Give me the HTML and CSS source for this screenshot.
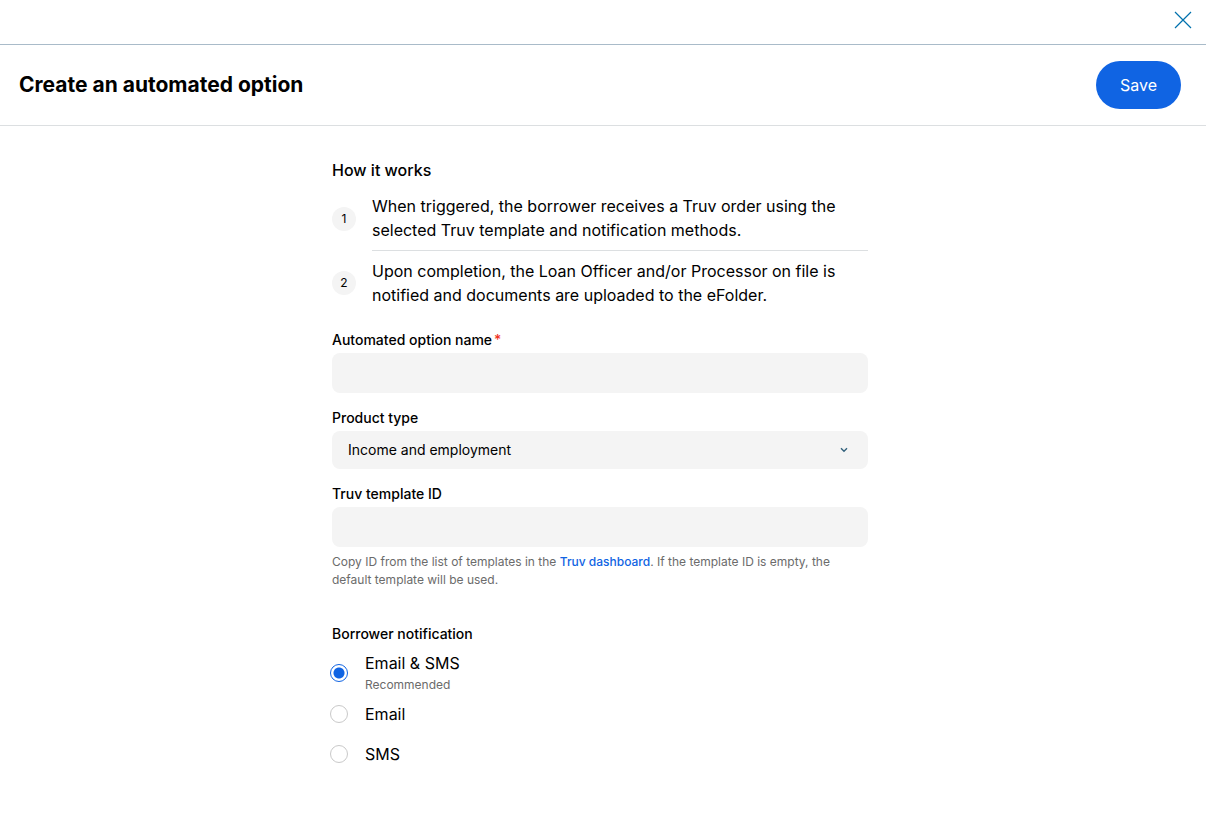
FILE: index.html
```html
<!DOCTYPE html>
<html lang="en">
<head>
<meta charset="utf-8">
<meta name="viewport" content="width=device-width, initial-scale=1">
<title>Create an automated option</title>
<link rel="stylesheet" href="styles.css">
</head>
<body>
<div class="topbar">
  <button class="close" type="button" aria-label="Close">
    <svg width="18" height="18" viewBox="0 0 18 18" fill="none" stroke="currentColor" stroke-width="1.2" aria-hidden="true"><path d="M1 1L17 17M17 1L1 17"/></svg>
  </button>
</div>
<header class="header">
  <h1 class="title">Create an automated option</h1>
  <button class="save" type="submit" form="option-form">Save</button>
</header>
<main class="main">
  <form class="form" id="option-form">
    <section class="how">
      <h2 class="how-title">How it works</h2>
      <ol class="steps">
        <li class="step"><span class="step-number">1</span><p class="step-text">When triggered, the borrower receives a Truv order using the selected Truv template and notification methods.</p></li>
        <li class="step"><span class="step-number">2</span><p class="step-text">Upon completion, the Loan Officer and/or Processor on file is notified and documents are uploaded to the eFolder.</p></li>
      </ol>
    </section>
    <div class="field">
      <label class="label" for="name">Automated option name<span class="required">*</span></label>
      <input class="control" id="name" type="text" required>
    </div>
    <div class="field">
      <label class="label" for="product">Product type</label>
      <div class="select-wrap">
        <select class="control select" id="product"><option>Income and employment</option></select>
        <svg class="chevron" width="8" height="6" viewBox="0 0 8 6" fill="none" stroke="currentColor" stroke-width="1.4" aria-hidden="true"><path d="M1 1.2L4 4.2L7 1.2"/></svg>
      </div>
    </div>
    <div class="field">
      <label class="label" for="template">Truv template ID</label>
      <input class="control" id="template" type="text" aria-describedby="template-hint">
      <p class="hint" id="template-hint">Copy ID from the list of templates in the <a class="link" href="#">Truv dashboard</a>. If the template ID is empty, the default template will be used.</p>
    </div>
    <fieldset class="choices">
      <legend class="label legend">Borrower notification</legend>
      <div class="choice">
        <input class="radio" type="radio" name="notify" id="both" checked>
        <label class="choice-label" for="both">Email &amp; SMS<span class="choice-note">Recommended</span></label>
      </div>
      <div class="choice">
        <input class="radio" type="radio" name="notify" id="email">
        <label class="choice-label" for="email">Email</label>
      </div>
      <div class="choice">
        <input class="radio" type="radio" name="notify" id="sms">
        <label class="choice-label" for="sms">SMS</label>
      </div>
    </fieldset>
  </form>
</main>
</body>
</html>
```
FILE: styles.css
```css
* { box-sizing: border-box; }
body {
  margin: 0;
  background: #fff;
  color: #000;
  font-family: Inter, "Liberation Sans", sans-serif;
  font-size: 16px;
  line-height: 24px;
}
h1, h2, p { margin: 0; }
button, input, select { font: inherit; color: inherit; }
.topbar {
  display: flex;
  justify-content: flex-end;
  padding: 8px 11px 12px;
  border-bottom: 1px solid #a9bbc9;
}
.close {
  display: flex;
  padding: 3px;
  border: 0;
  background: none;
  color: #0071ad;
}
.header {
  display: flex;
  align-items: center;
  justify-content: space-between;
  padding: 16px 25px 16px 19px;
  border-bottom: 1px solid #dcdfe1;
}
.title {
  font-size: 21px;
  line-height: 32px;
  font-weight: 700;
}
.save {
  height: 48px;
  padding: 0 24px;
  border: 0;
  border-radius: 24px;
  background: #1064e3;
  color: #fff;
}
.main { padding: 32px 6px 32px 0; }
.form {
  max-width: 536px;
  margin: 0 auto;
}
.how { margin-bottom: 16px; }
.how-title {
  font-size: 16px;
  line-height: 24px;
  font-weight: 500;
}
.steps {
  margin: 4px 0 0;
  padding: 0;
  list-style: none;
}
.step {
  display: flex;
  align-items: center;
  gap: 16px;
}
.step-number {
  display: flex;
  align-items: center;
  justify-content: center;
  flex: none;
  width: 24px;
  height: 24px;
  border-radius: 50%;
  background: #f4f4f4;
  font-size: 12px;
}
.step-text {
  flex: 1;
  padding: 8px 32px 8px 0;
}
.step:first-child .step-text { border-bottom: 1px solid #dcdfe1; }
.field { margin-bottom: 16px; }
.label {
  display: block;
  margin-bottom: 4px;
  font-size: 14px;
  line-height: 18px;
  font-weight: 500;
}
.required {
  margin-left: 2px;
  color: #f0331f;
}
.control {
  display: block;
  width: 100%;
  height: 40px;
  padding: 0 16px;
  border: 0;
  border-radius: 8px;
  background: #f4f4f4;
  font-size: 14px;
}
.select-wrap { position: relative; }
.select {
  height: 38px;
  appearance: none;
}
.chevron {
  position: absolute;
  top: 16px;
  right: 20px;
  color: #32617c;
  pointer-events: none;
}
.hint {
  margin-top: 6px;
  color: #6b6b6b;
  font-size: 12px;
  line-height: 18px;
}
.link {
  color: #1064e3;
  font-weight: 500;
  text-decoration: none;
}
.choices {
  margin: 36px 0 0;
  padding: 0;
  border: 0;
}
.legend {
  margin-bottom: 8px;
  padding: 0;
}
.choice {
  display: flex;
  align-items: center;
  gap: 17px;
  min-height: 40px;
  margin-left: -2px;
}
.radio {
  flex: none;
  width: 18px;
  height: 18px;
  margin: 0;
  border: 1px solid #c9c9c9;
  border-radius: 50%;
  background: #fff;
  appearance: none;
}
.radio:checked {
  border-color: #1064e3;
  background: radial-gradient(circle, #1064e3 5px, #fff 6px);
}
.choice-note {
  display: block;
  margin-top: 1px;
  color: #6b6b6b;
  font-size: 12px;
  line-height: 18px;
}
```
